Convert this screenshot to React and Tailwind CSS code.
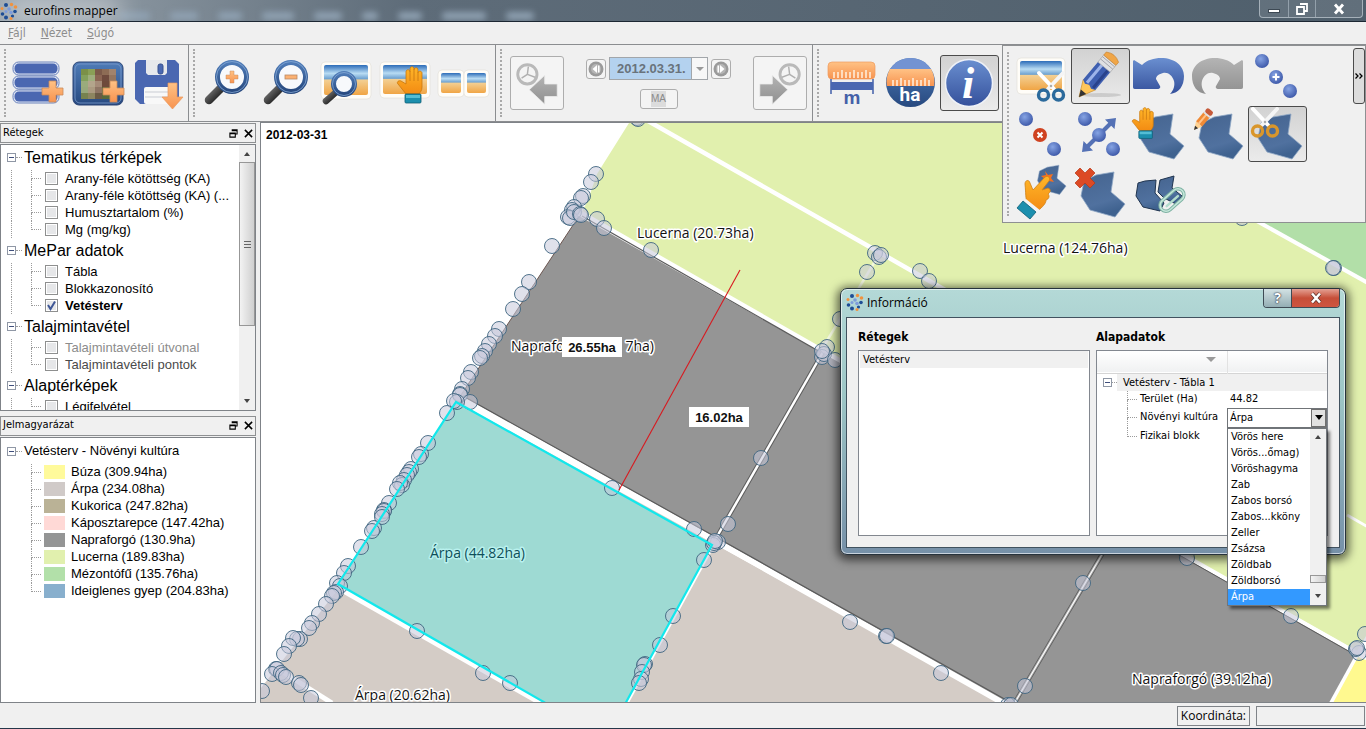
import { useState } from 'react';

const layerGroups = [
  {
    name: 'Tematikus térképek',
    items: [
      { label: 'Arany-féle kötöttség (KA)' },
      { label: 'Arany-féle kötöttség (KA) (...' },
      { label: 'Humusztartalom (%)' },
      { label: 'Mg (mg/kg)' },
    ],
  },
  {
    name: 'MePar adatok',
    items: [
      { label: 'Tábla' },
      { label: 'Blokkazonosító' },
      { label: 'Vetésterv', checked: true },
    ],
  },
  {
    name: 'Talajmintavétel',
    items: [
      { label: 'Talajmintavételi útvonal', tone: 'text-[#8c8c8c]' },
      { label: 'Talajmintavételi pontok', tone: 'text-[#4a4a4a]' },
    ],
  },
  { name: 'Alaptérképek', items: [{ label: 'Légifelvétel' }] },
];

const legend = [
  { label: 'Búza (309.94ha)', color: 'bg-[#fffa9b]' },
  { label: 'Árpa (234.08ha)', color: 'bg-[#d0cac8]' },
  { label: 'Kukorica (247.82ha)', color: 'bg-[#bab296]' },
  { label: 'Káposztarepce (147.42ha)', color: 'bg-[#ffd9d6]' },
  { label: 'Napraforgó (130.9ha)', color: 'bg-[#949595]' },
  { label: 'Lucerna (189.83ha)', color: 'bg-[#e1f0ae]' },
  { label: 'Mézontófű (135.76ha)', color: 'bg-[#b2e0a9]' },
  { label: 'Ideiglenes gyep (204.83ha)', color: 'bg-[#88afcd]' },
];

const crops = [
  'Vörös here', 'Vörös...őmag)', 'Vöröshagyma', 'Zab', 'Zabos borsó', 'Zabos...kköny',
  'Zeller', 'Zsázsa', 'Zöldbab', 'Zöldborsó', 'Árpa',
];

// field boundary nodes, in map units
const nodes = [
  [637, 118], [638, 119], [596, 174], [591, 182], [583, 196], [581, 198], [574, 207], [572, 210], [568, 217],
  [570, 218], [574, 212], [580, 214], [581, 215], [597, 219], [604, 228], [651, 250], [552, 246],
  [529, 282], [522, 294], [513, 309], [499, 329], [495, 336], [489, 344], [485, 351], [482, 356],
  [480, 358], [471, 372], [468, 378], [462, 389], [460, 394], [460, 395], [470, 402], [457, 402],
  [454, 401], [447, 413], [428, 443], [421, 454], [419, 457], [411, 469], [409, 472], [407, 475],
  [404, 480], [402, 485], [400, 483], [397, 489], [389, 503], [384, 510], [384, 511], [382, 514],
  [382, 517], [374, 528], [372, 531], [361, 547], [348, 566], [344, 573], [337, 583], [340, 586],
  [336, 592], [334, 593], [332, 596], [326, 604], [319, 614], [312, 623], [309, 628], [300, 639],
  [297, 639], [293, 638], [289, 646], [284, 654], [276, 669], [277, 669], [272, 674], [281, 673],
  [283, 675], [286, 677], [299, 683], [301, 685], [311, 698], [262, 691], [417, 631], [483, 673],
  [510, 683], [612, 488], [694, 529], [728, 524], [718, 542], [713, 545], [714, 543], [715, 541], [704, 560],
  [761, 458], [673, 616], [660, 645], [645, 664], [644, 665], [642, 672], [641, 679], [639, 683],
  [850, 622], [886, 636], [887, 636], [941, 673], [1025, 686], [1008, 705], [1011, 705], [875, 253], [879, 257],
  [881, 255], [867, 272], [920, 271], [929, 281], [840, 319], [827, 347], [822, 357],
  [824, 354], [822, 351], [835, 360], [1083, 583], [1187, 558], [1291, 616], [1359, 653], [1356, 649], [1357, 648],
  [1365, 634], [1334, 268], [1333, 268], [1242, 218],
];

function Gradients() {
  return (
    <svg width="0" height="0" className="absolute" aria-hidden="true">
      <defs>
        <linearGradient id="blue" x1="0" y1="0" x2="0" y2="1">
          <stop offset="0" stopColor="#6a8fd0" />
          <stop offset="1" stopColor="#34509b" />
        </linearGradient>
        <linearGradient id="navy" x1="0" y1="0" x2="0" y2="1">
          <stop offset="0" stopColor="#4f7cb8" />
          <stop offset="1" stopColor="#27497f" />
        </linearGradient>
        <radialGradient id="ball" cx="0.4" cy="0.35" r="0.7">
          <stop offset="0" stopColor="#86a4e4" />
          <stop offset="1" stopColor="#3a55a6" />
        </radialGradient>
        <linearGradient id="orange" x1="0" y1="0" x2="0" y2="1">
          <stop offset="0" stopColor="#ffc285" />
          <stop offset="1" stopColor="#f79350" />
        </linearGradient>
        <linearGradient id="hand" x1="0" y1="0" x2="0" y2="1">
          <stop offset="0" stopColor="#ffb629" />
          <stop offset="1" stopColor="#f38b12" />
        </linearGradient>
        <linearGradient id="sky" x1="0" y1="0" x2="0" y2="1">
          <stop offset="0" stopColor="#2c6cb8" />
          <stop offset="0.28" stopColor="#b9dcf3" />
          <stop offset="0.46" stopColor="#6fa2d0" />
          <stop offset="0.5" stopColor="#f3cf92" />
          <stop offset="1" stopColor="#f0a545" />
        </linearGradient>
        <linearGradient id="field" x1="0" y1="0" x2="0.3" y2="1">
          <stop offset="0" stopColor="#45648f" />
          <stop offset="0.75" stopColor="#50719f" />
          <stop offset="1" stopColor="#3f628f" />
        </linearGradient>
        <linearGradient id="grey" x1="0" y1="0" x2="0" y2="1">
          <stop offset="0" stopColor="#b4b4b4" />
          <stop offset="1" stopColor="#8f8f8f" />
        </linearGradient>
        <linearGradient id="stick" x1="0" y1="0" x2="1" y2="1">
          <stop offset="0" stopColor="#777" />
          <stop offset="1" stopColor="#161616" />
        </linearGradient>
      </defs>
    </svg>
  );
}

function Icon({ children }) {
  return (
    <svg viewBox="0 0 59 56" className="block h-14 w-[59px] shrink-0" aria-hidden="true">{children}</svg>
  );
}

const Plus = ({ x, y, s = 21, fill = 'url(#orange)', stroke = '#c98a5c' }) => (
  <path
    transform={`translate(${x} ${y}) scale(${s / 21})`}
    d="M7 0h7v7h7v7h-7v7H7v-7H0V7h7z"
    fill={fill}
    stroke={stroke}
    strokeWidth="0.8"
  />
);

const Photo = ({ x, y, w, h }) => (
  <g>
    <rect x={x} y={y} width={w} height={h} rx="4" fill="#fffdf8" stroke="#e3e0da" strokeWidth="0.7" />
    <rect x={x + 3} y={y + 3} width={w - 6} height={h - 7} rx="2" fill="url(#sky)" />
  </g>
);

const Lens = ({ cx, cy, r, hx, hy }) => (
  <g>
    <path
      d={`M${cx - r * 0.72} ${cy + r * 0.72}L${hx} ${hy}`}
      stroke="url(#stick)"
      strokeWidth={r * 0.5}
      strokeLinecap="round"
    />
    <circle cx={cx} cy={cy} r={r - 2.5} fill="#f7f9fc" stroke="url(#navy)" strokeWidth="5" />
    <circle cx={cx} cy={cy} r={r - 1.5} fill="none" stroke="#86a9d6" strokeWidth="0.8" />
  </g>
);

const Hand = ({ transform }) => (
  <g transform={transform}>
    <path
      d="M9 28C6 25 4 21 1 18c-2-2 1-4 3-3l5 3V6c0-3 4-3 4 0V3c0-3 4-3 4 0v1c0-3 4-3 4 0v3c0-3 4-2 4 0v14c0 4-2 5-3 7z"
      fill="url(#hand)"
      stroke="#c9770d"
      strokeWidth="0.8"
    />
    <path d="M13 6v9M17 4v11M21 7v8" stroke="#cf7f14" strokeWidth="1" />
    <rect x="8" y="28" width="16" height="9" rx="1" fill="#1c8fae" stroke="#0c5d75" strokeWidth="0.8" />
    <rect x="9" y="29" width="14" height="3" fill="#54bdd4" />
  </g>
);

const Field = ({ transform }) => (
  <path
    transform={transform}
    d="M43 8L40 28L54 40L44 53L19 46L10 32L13 17L25 11Z"
    fill="url(#field)"
    stroke="#8ea7c5"
    strokeWidth="0.8"
  />
);

const Scissors = ({ x, y, ring }) => (
  <g transform={`translate(${x} ${y})`} fill="none">
    <path d="M2 0L17 16" stroke="#fff" strokeWidth="4" strokeLinecap="round" />
    <path d="M26 0L11 16" stroke="#f5f5f5" strokeWidth="4" strokeLinecap="round" />
    <circle cx="14" cy="13" r="1.2" fill="#aaa" />
    <circle cx="6.5" cy="22" r="5" stroke={ring} strokeWidth="3.4" />
    <circle cx="21.5" cy="22" r="5" stroke={ring} strokeWidth="3.4" />
  </g>
);

const Ball = ({ cx, cy, fill = 'url(#ball)' }) => <circle cx={cx} cy={cy} r="7" fill={fill} />;

const mosaic = [
  '#7b9048', '#8aa056', '#7c5a4a', '#8d6c55', '#a0836d',
  '#84a05c', '#9fae7e', '#8b6553', '#6f4b3e', '#93755f',
  '#9aab7c', '#b3a58b', '#a58b78', '#6e4a3b', '#7a5d49',
  '#98a87c', '#ab9a80', '#8e7564', '#5f6b3c', '#7d6b4b',
  '#77824f', '#8d8560', '#6b5a45', '#59693a', '#66753f',
];

const DataIcon = () => (
  <Icon>
    {[7, 21, 35].map((y) => (
      <g key={y}>
        <rect x="4" y={y} width="46" height="13" rx="5.5" fill="#dfe5f3" stroke="#5b76b6" strokeWidth="0.9" />
        <rect x="5.5" y={y + 1.5} width="43" height="10" rx="4.5" fill="#4a67b1" />
      </g>
    ))}
    <Plus x={33} y={26} />
  </Icon>
);

const RasterIcon = () => (
  <Icon>
    <rect x="5" y="7" width="50" height="43" rx="6" fill="url(#navy)" stroke="#2a4374" />
    <rect x="7" y="9" width="46" height="39" rx="5" fill="none" stroke="#7b9bcc" strokeWidth="0.8" />
    {mosaic.map((c, i) => (
      <rect key={i} x={13 + (i % 5) * 7} y={14 + Math.floor(i / 5) * 6} width="7" height="6" fill={c} />
    ))}
    <Plus x={35} y={26} />
  </Icon>
);

const SaveIcon = () => (
  <Icon>
    <path d="M11 5h37l4 4v37l-3 3H13l-5-5V8z" fill="#4a67b1" />
    <path d="M19 5h21v13l-2 2H21l-2-2z" fill="#e6e8ec" />
    <rect x="31" y="9" width="5" height="10" rx="2" fill="#4a68b2" stroke="#36508f" />
    <rect x="17" y="32" width="27" height="17" rx="2" fill="#f8f8f8" />
    <path d="M18 37h25M18 42h25" stroke="#c9ccd3" />
    <path d="M41 28h9v14h6L45.500 54L35 42h6z" fill="url(#orange)" stroke="#e99a5e" strokeWidth="0.7" />
  </Icon>
);

const ZoomInIcon = () => (
  <Icon>
    <Lens cx={34} cy={22} r={17} hx={11} hy={45} />
    <Plus x={28} y={16} s={12} />
  </Icon>
);

const ZoomOutIcon = () => (
  <Icon>
    <Lens cx={34} cy={22} r={17} hx={11} hy={45} />
    <rect x="28" y="20" width="12" height="4" fill="#fbb173" stroke="#b98a66" strokeWidth="0.8" />
  </Icon>
);

const ZoomAreaIcon = () => (
  <Icon>
    <Photo x={5} y={7} w={50} h={37} />
    <Lens cx={28} cy={29} r={13} hx={10} hy={46} />
  </Icon>
);

const PanIcon = () => (
  <Icon>
    <Photo x={5} y={7} w={50} h={36} />
    <Hand transform="translate(22 11)" />
  </Icon>
);

const CompareIcon = () => (
  <Icon>
    <Photo x={4} y={15} w={26} h={27} />
    <Photo x={30} y={15} w={25} h={27} />
  </Icon>
);

const LengthIcon = () => (
  <Icon>
    <rect x="6" y="7" width="47" height="17" rx="4" fill="url(#orange)" stroke="#ee9c5f" strokeWidth="0.7" />
    <path d="M12 23v-6M16 23v-6M20 23v-8M24 23v-6M28 23v-6M32 23v-8M36 23v-6M40 23v-6M44 23v-8M48 23v-6" stroke="#fff0df" strokeWidth="1.500" />
    <path d="M9 24v15M51 24v15" stroke="#6d83bb" strokeWidth="2" />
    <rect x="9" y="27" width="42" height="8" fill="#4a67b1" />
    <text x="30" y="49" textAnchor="middle" fill="#4460a8" className="font-['Liberation_Sans'] text-[19px] font-bold">m</text>
  </Icon>
);

const AreaIcon = () => (
  <Icon>
    <circle cx="29.500" cy="27.500" r="24.500" fill="url(#navy)" />
    <path d="M9 14A24.500 24.500 0 0 1 50 14z" fill="#7393d2" />
    <path d="M9 14H50A24.500 24.500 0 0 1 53 31H6A24.500 24.500 0 0 1 9 14z" fill="url(#orange)" />
    <path d="M12 31v-6M16 31v-6M20 31v-8M24 31v-6M28 31v-6M32 31v-8M36 31v-6M40 31v-6M44 31v-8M48 31v-6" stroke="#fff0df" strokeWidth="1.500" />
    <text x="29" y="46" textAnchor="middle" fill="#fff" className="font-['Roboto'] text-[19px] font-bold">ha</text>
  </Icon>
);

const InfoIcon = () => (
  <Icon>
    <circle cx="29" cy="28" r="23.500" fill="url(#blue)" stroke="#eef1f7" strokeWidth="1.500" />
    <text x="28" y="43" textAnchor="middle" fill="#fff" className="font-['Liberation_Serif'] text-[44px] font-bold italic">i</text>
  </Icon>
);

const ClipPhotoIcon = () => (
  <Icon>
    <Photo x={5} y={10} w={48} h={36} />
    <Scissors x={25} y={25} ring="#2b6a9c" />
  </Icon>
);

const PencilIcon = () => (
  <Icon>
    <ellipse cx="30" cy="47" rx="20" ry="2" fill="#b9b9b9" opacity="0.6" />
    <g transform="translate(8 49) rotate(40)">
      <path d="M0 0L-8 -16H8z" fill="#ffc65a" stroke="#c58a2c" strokeWidth="0.6" />
      <path d="M0 0L-3.500 -7H3.500z" fill="#333" />
      <path d="M-8 -16L-4 -14L0 -16L4 -14L8 -16V-40H-8z" fill="#3f5fb0" />
      <path d="M-3 -16V-40" stroke="#9db4ea" strokeWidth="3" />
      <path d="M5 -16V-40" stroke="#2a438c" strokeWidth="3" />
      <rect x="-8" y="-48" width="16" height="9" fill="#dfe0e3" stroke="#a6a6a6" strokeWidth="0.6" />
      <path d="M-8 -46H8M-8 -43H8" stroke="#9c9ca3" strokeWidth="0.8" />
      <path d="M-8 -48V-52Q0 -57 8 -52V-48z" fill="#f0a648" stroke="#c77f2a" strokeWidth="0.6" />
    </g>
  </Icon>
);

const undoPath = 'M4 12L12 17C17 12 24 10 31 10C45 10 54 18 54 28C54 38 49 45 40 46C44 42 45 37 44 33C42 27 38 24 33 25C29 26 26 28 26 31L30 38C31 40 29 41 28 41H5C3 41 3 40 3 38V13Z';

const UndoIcon = () => (
  <Icon><path d={undoPath} fill="url(#blue)" /></Icon>
);

const RedoIcon = () => (
  <Icon><path d={undoPath} transform="translate(57 0) scale(-1 1)" fill="url(#grey)" /></Icon>
);

const NodeAddIcon = () => (
  <Icon>
    <Ball cx={14} cy={13} /><Ball cx={28} cy={29} /><Ball cx={42} cy={43} />
    <path d="M28 25.500v7M24.500 29h7" stroke="#fff" strokeWidth="2" />
  </Icon>
);

const NodeDeleteIcon = () => (
  <Icon>
    <Ball cx={14} cy={13} /><Ball cx={28} cy={29} fill="#cf4220" /><Ball cx={42} cy={43} />
    <path d="M25.500 26.500l5 5M30.500 26.500l-5 5" stroke="#fff" strokeWidth="2" />
  </Icon>
);

const NodeMoveIcon = () => (
  <Icon>
    <Ball cx={14} cy={13} /><Ball cx={42} cy={43} />
    <path d="M16 41L40 17" stroke="#5471b5" strokeWidth="4" />
    <path d="M45 12L43.500 23L34 13.500zM11 46L12.500 35L22 44.500z" fill="#5471b5" />
    <Ball cx={28} cy={29} />
  </Icon>
);

const FieldPanIcon = () => (
  <Icon><Field /><Hand transform="translate(2 1) scale(0.85)" /></Icon>
);

const FieldEditIcon = () => (
  <Icon>
    <Field />
    <g transform="translate(5 24) rotate(40)">
      <path d="M0 0L-4 -8H4z" fill="#ffd292" />
      <path d="M0 0L-2 -4H2z" fill="#333" />
      <rect x="-4" y="-20" width="8" height="12" fill="#f08a35" />
      <rect x="-1.500" y="-20" width="2" height="12" fill="#ffc38a" />
      <rect x="-4" y="-22" width="8" height="3" fill="#e0e0e0" />
      <rect x="-4" y="-26" width="8" height="5" rx="2" fill="#c65a3a" />
    </g>
  </Icon>
);

const FieldCutIcon = () => (
  <Icon><Field /><Scissors x={3} y={3} ring="#d9962b" /></Icon>
);

const FieldSelectIcon = () => (
  <Icon>
    <Field transform="translate(19 -4) scale(0.65)" />
    <path d="M33 7l3 4 5-1-2 4 3 4-5-1-4 3v-5l-4-3 5-1z" fill="#f5701e" />
    <path
      d="M16 41C13 34 14 29 13 20C13 16 17 15 18 19L21 26L33 13C36 11 39 14 37 17L30 26L36 24C39 25 39 28 36 30C38 32 37 35 34 36C34 40 30 43 26 47Z"
      fill="url(#hand)"
      stroke="#cf7f14"
      strokeWidth="0.8"
    />
    <path d="M14 35L29 47L25 51L10 39z" fill="#f1f4f5" />
    <path d="M11 37L24 48L18 55L5 44z" fill="#1c8fae" stroke="#0c5d75" strokeWidth="0.8" />
  </Icon>
);

const FieldDeleteIcon = () => (
  <Icon>
    <Field />
    <path d="M9 4l5 5 5-5 5 5-5 5 5 5-5 5-5-5-5 5-5-5 5-5-5-5z" fill="#dc4a25" stroke="#b83513" strokeWidth="0.7" />
  </Icon>
);

const FieldLinkIcon = () => (
  <Icon>
    <path d="M26 16L25 29L34 39L30 47L13 43L6 32L8 19L15 17z" fill="url(#field)" stroke="#20344f" />
    <path d="M44 12L42 24L52 32L46 40L34 34L28 28L30 16z" fill="url(#field)" stroke="#20344f" />
    <g transform="translate(42 36) rotate(-42)" fill="none">
      <rect x="-14" y="-6" width="28" height="12" rx="6" stroke="#7fb3a4" strokeWidth="3.500" />
      <rect x="-14" y="-6" width="28" height="12" rx="6" stroke="#c5e6da" strokeWidth="1.500" />
      <path d="M-8 1H7" stroke="#b3dccd" strokeWidth="2.500" strokeLinecap="round" />
    </g>
  </Icon>
);

const MapperLogo = () => (
  <svg viewBox="0 0 18 18" className="h-[18px] w-[18px] shrink-0" aria-hidden="true">
    <g fill="#1d4d95">
      <circle cx="6" cy="3" r="2" /><circle cx="2.500" cy="12" r="1.800" /><circle cx="6" cy="15.500" r="2" />
      <circle cx="15" cy="9.500" r="1.800" /><circle cx="12.500" cy="14" r="1.600" />
    </g>
    <g fill="#f0923e">
      <circle cx="11.500" cy="2.500" r="1.700" /><circle cx="15.500" cy="5" r="1.800" /><circle cx="2" cy="6.500" r="1.500" />
      <circle cx="11" cy="16.500" r="1.500" />
    </g>
    <g fill="#7d9cdb">
      <circle cx="9" cy="7" r="1.800" /><circle cx="6" cy="9.500" r="1.500" /><circle cx="11" cy="10.500" r="1.800" />
    </g>
  </svg>
);

const ClockArrow = ({ flip }) => (
  <svg viewBox="0 0 54 54" className={`h-[52px] w-[52px] ${flip ? '-scale-x-100' : ''}`} aria-hidden="true">
    <circle cx="17" cy="18" r="10" fill="#f4f4f4" stroke="#b9b9b9" strokeWidth="3" />
    <path d="M18 10l-1 8 8 3M17 18l-6 4" fill="none" stroke="#b0b0b0" strokeWidth="1.500" />
    <path d="M19 34L35 19V28H48V41H35V49z" fill="url(#grey)" stroke="#ededed" strokeWidth="0.800" />
  </svg>
);

const StepIcon = ({ flip }) => (
  <svg viewBox="0 0 16 16" className={`h-4 w-4 ${flip ? '-scale-x-100' : ''}`} aria-hidden="true">
    <circle cx="8" cy="8" r="7.500" fill="#9a9a9a" />
    <circle cx="8" cy="8" r="5" fill="#b5b5b5" />
    <path d="M9 4v8L4.500 8zM10 4.500h1.500v7H10z" fill="#fff" />
  </svg>
);

function Grip() {
  return <span className="my-1 mr-[3px] ml-1 w-0.5 shrink-0 self-stretch border-l-2 border-dotted border-[#a9a9a9]" />;
}

function ToolButton({ label, active, children }) {
  return (
    <button
      type="button"
      aria-label={label}
      className={`flex h-14 w-[59px] shrink-0 items-center justify-center overflow-hidden rounded-[3px] ${
        active ? 'border border-[#4b4b4b] bg-gradient-to-b from-[#d2d2d2] to-[#ebebeb]' : ''
      }`}
    >
      {children}
    </button>
  );
}

function TitleBar() {
  return (
    <header className="relative flex h-[22px] shrink-0 items-start overflow-hidden border-b border-[#1c2733] bg-gradient-to-r from-[#9aa5ae] via-[#5e6c79] via-30% to-[#4f5f6c]">
      <div className="absolute inset-x-0 top-2 flex gap-5 pl-[118px] blur-[3px]" aria-hidden="true">
        {['w-8', 'w-7', 'w-6', 'w-8', 'w-7', 'w-4', 'w-6', 'w-11', 'w-7'].map((w, i) => (
          <span key={i} className={`${w} mt-1 h-2 rounded bg-[#8fa1b2]`} />
        ))}
      </div>
      <div className="absolute inset-y-0 left-2 w-28 bg-white/50 blur-md" aria-hidden="true" />
      <div className="relative flex items-center gap-[6px]">
        <MapperLogo />
        <h1 className="text-xs leading-[22px] text-black">eurofins mapper</h1>
      </div>
      <div className="relative mr-[3px] ml-auto flex h-[18px] divide-x divide-[#93a0ab] rounded-b border border-t-0 border-[#a5b0b9] bg-white/10">
        <button type="button" aria-label="Kis méret" className="flex w-[29px] items-center justify-center">
          <span className="mt-1 h-1 w-3 border border-[#3d4954] bg-white" />
        </button>
        <button type="button" aria-label="Előző méret" className="flex w-[27px] items-center justify-center">
          <svg viewBox="0 0 12 12" className="h-3 w-3"><path d="M4 1h7v7H8M1 4h7v7H1z" fill="none" stroke="#fff" strokeWidth="1.800" /></svg>
        </button>
        <button type="button" aria-label="Bezárás" className="flex w-[46px] items-center justify-center">
          <svg viewBox="0 0 12 12" className="h-3 w-3"><path d="M2 1.500l8 9M10 1.500l-8 9" stroke="#fff" strokeWidth="2.800" /></svg>
        </button>
      </div>
    </header>
  );
}

function MenuBar() {
  return (
    <nav className="flex h-[23px] shrink-0 items-center gap-[15px] border-b border-[#8b8d90] px-2 font-['DejaVu_Sans_Condensed','Noto_Sans',sans-serif] text-xs text-[#8d8d8d]">
      <a href="#fajl"><u>F</u>ájl</a>
      <a href="#nezet"><u>N</u>ézet</a>
      <a href="#sugo"><u>S</u>úgó</a>
    </nav>
  );
}

function DateTools() {
  const softButton = 'flex items-center justify-center rounded-[3px] border border-[#adadad] bg-[#f4f4f4]';
  return (
    <div className="flex items-center gap-[22px] px-[5px]">
      <button type="button" aria-label="Előző időpont" className={`${softButton} h-[54px] w-[54px]`}><ClockArrow /></button>
      <div className="flex flex-col items-center gap-[9px]">
        <div className="flex items-center gap-[3px]">
          <button type="button" aria-label="Vissza" className={`${softButton} h-5 w-5`}><StepIcon /></button>
          <div className="flex h-[23px] w-[99px] border border-[#a2a6aa] bg-white">
            <input
              aria-label="Dátum"
              defaultValue="2012.03.31."
              className="w-[81px] min-w-0 bg-[#b4d2ef] pl-[7px] font-['Liberation_Sans'] text-[13px] font-bold text-[#69737c] outline-none"
            />
            <button type="button" aria-label="Naptár" className="flex flex-1 items-center justify-center border-l border-[#a2a6aa] bg-[#f7f7f7]">
              <span className="border-x-4 border-t-4 border-x-transparent border-t-[#999]" />
            </button>
          </div>
          <button type="button" aria-label="Tovább" className={`${softButton} h-5 w-5`}><StepIcon flip /></button>
        </div>
        <button type="button" className={`${softButton} h-5 w-[38px]`}>
          <span className="bg-[#dcdcdc] font-['Liberation_Sans'] text-[10px] leading-4 text-[#8a8a8a]">MA</span>
        </button>
      </div>
      <button type="button" aria-label="Következő időpont" className={`${softButton} h-[54px] w-[54px]`}><ClockArrow flip /></button>
    </div>
  );
}

function EditPanel() {
  return (
    <div className="absolute top-0 right-0 z-20 flex border border-[#8e9092] bg-[#f0f0f0] pt-0.5 pb-0.5">
      <Grip />
      <div className="grid grid-cols-5 gap-y-0.5">
        <ToolButton label="Kép kivágása"><ClipPhotoIcon /></ToolButton>
        <ToolButton label="Szerkesztés" active><PencilIcon /></ToolButton>
        <ToolButton label="Visszavonás"><UndoIcon /></ToolButton>
        <ToolButton label="Újra"><RedoIcon /></ToolButton>
        <ToolButton label="Pont hozzáadása"><NodeAddIcon /></ToolButton>
        <ToolButton label="Pont törlése"><NodeDeleteIcon /></ToolButton>
        <ToolButton label="Pont mozgatása"><NodeMoveIcon /></ToolButton>
        <ToolButton label="Tábla mozgatása"><FieldPanIcon /></ToolButton>
        <ToolButton label="Tábla rajzolása"><FieldEditIcon /></ToolButton>
        <ToolButton label="Tábla vágása" active><FieldCutIcon /></ToolButton>
        <ToolButton label="Tábla kijelölése"><FieldSelectIcon /></ToolButton>
        <ToolButton label="Tábla törlése"><FieldDeleteIcon /></ToolButton>
        <ToolButton label="Táblák összekapcsolása"><FieldLinkIcon /></ToolButton>
      </div>
      <button
        type="button"
        aria-label="További eszközök"
        className="ml-[46px] flex h-14 w-3 items-center justify-center rounded-[3px] border border-[#4b4b4b] bg-[#dcdcdc]"
      >
        <svg viewBox="0 0 8 6" className="h-[6px] w-2 shrink-0"><path d="M0.500 0.500L3 3L0.500 5.500M4.500 0.500L7 3L4.500 5.500" fill="none" stroke="#000" strokeWidth="1.300" /></svg>
      </button>
    </div>
  );
}

function Toolbar() {
  const group = 'flex shrink-0 items-center border-r border-[#8b8d90]';
  return (
    <div className="relative flex h-[77px] shrink-0 border-b border-[#8b8d90]">
      <div className={group}>
        <Grip />
        <ToolButton label="Adatok hozzáadása"><DataIcon /></ToolButton>
        <ToolButton label="Raszter hozzáadása"><RasterIcon /></ToolButton>
        <ToolButton label="Mentés"><SaveIcon /></ToolButton>
        <span className="w-0.5" />
      </div>
      <div className={group}>
        <Grip />
        <ToolButton label="Nagyítás"><ZoomInIcon /></ToolButton>
        <ToolButton label="Kicsinyítés"><ZoomOutIcon /></ToolButton>
        <ToolButton label="Kijelölt terület nagyítása"><ZoomAreaIcon /></ToolButton>
        <ToolButton label="Mozgatás"><PanIcon /></ToolButton>
        <ToolButton label="Osztott nézet"><CompareIcon /></ToolButton>
        <span className="w-0.5" />
      </div>
      <div className={group}>
        <Grip />
        <DateTools />
      </div>
      <div className="flex shrink-0 items-center">
        <Grip />
        <ToolButton label="Távolságmérés"><LengthIcon /></ToolButton>
        <ToolButton label="Területmérés"><AreaIcon /></ToolButton>
        <ToolButton label="Információ" active><InfoIcon /></ToolButton>
      </div>
      <EditPanel />
    </div>
  );
}

function Expander() {
  return (
    <span className="flex h-[9px] w-[9px] shrink-0 items-center justify-center border border-[#8f97a5] bg-white">
      <span className="h-px w-[5px] bg-[#3f4f7c]" />
    </span>
  );
}

function Branch({ last }) {
  return (
    <span className="flex w-[10px] shrink-0 flex-col self-stretch">
      <span className="flex-1 border-b border-l border-dotted border-[#9b9b9b]" />
      <span className={`flex-1 ${last ? '' : 'border-l border-dotted border-[#9b9b9b]'}`} />
    </span>
  );
}

function DockHeader({ title }) {
  return (
    <div className="flex h-5 shrink-0 items-center border border-[#8e9092] px-0.5 font-['DejaVu_Sans_Condensed','Noto_Sans',sans-serif] text-[11px]">
      <h2>{title}</h2>
      <button type="button" aria-label="Leválasztás" className="ml-auto">
        <svg viewBox="0 0 10 10" className="h-[9px] w-[9px]"><path d="M3 1h6v4.500H7M1 4.500h6V9H1zM3 1.800h6M1 5.300h6" fill="none" stroke="#000" strokeWidth="1.200" /></svg>
      </button>
      <button type="button" aria-label="Panel bezárása" className="ml-[6px]">
        <svg viewBox="0 0 10 10" className="h-[9px] w-[9px]"><path d="M1 1l8 8M9 1l-8 8" stroke="#000" strokeWidth="1.700" /></svg>
      </button>
    </div>
  );
}

function ScrollArrow({ up }) {
  return (
    <span className="flex h-[17px] shrink-0 items-center justify-center">
      <span className={`border-x-[3px] border-x-transparent ${up ? 'border-b-4 border-b-[#444]' : 'border-t-4 border-t-[#444]'}`} />
    </span>
  );
}

function LayerPanel() {
  return (
    <section className="mt-px flex min-h-0 flex-1 flex-col">
      <DockHeader title="Rétegek" />
      <div className="mt-px flex min-h-0 flex-1 border border-[#7f8388] bg-white">
        <div className="min-w-0 flex-1 overflow-hidden font-['Liberation_Sans',sans-serif]">
          {layerGroups.map((group) => (
            <div key={group.name}>
              <div className="flex h-[25px] items-center pl-[6px]">
                <Expander />
                <span className="w-[6px] border-t border-dotted border-[#9b9b9b]" />
                <span className="pl-0.5 text-base whitespace-nowrap">{group.name}</span>
              </div>
              {group.items.map((item, i) => (
                <label key={item.label} className="flex h-[17px] items-center pl-[10px]">
                  <span className="w-5 self-stretch border-l border-dotted border-[#9b9b9b]" />
                  <Branch last={i === group.items.length - 1} />
                  <span className="relative ml-1 flex h-[13px] w-[13px] shrink-0">
                    <input
                      type="checkbox"
                      defaultChecked={item.checked}
                      className="peer h-[13px] w-[13px] appearance-none border border-[#8e8f8f] bg-[#e6e7e9] shadow-[inset_0_0_0_1px_#fff]"
                    />
                    <svg viewBox="0 0 13 13" className="pointer-events-none absolute inset-0 hidden peer-checked:block">
                      <path d="M3 6l2.500 4L10 2.500" fill="none" stroke="#3f5796" strokeWidth="2" />
                    </svg>
                  </span>
                  <span className={`pl-[7px] text-[13px] whitespace-nowrap ${item.checked ? 'font-bold' : ''} ${item.tone || ''}`}>
                    {item.label}
                  </span>
                </label>
              ))}
            </div>
          ))}
        </div>
        <div className="flex w-4 shrink-0 flex-col bg-[#f0f0f0]">
          <ScrollArrow up />
          <div className="flex h-[164px] flex-col items-center justify-center gap-px border border-[#979797] bg-gradient-to-r from-[#f3f3f3] to-[#cfcfcf]">
            <span className="h-px w-[7px] bg-[#666]" />
            <span className="mt-px h-px w-[7px] bg-[#666]" />
            <span className="mt-px h-px w-[7px] bg-[#666]" />
          </div>
          <div className="flex-1" />
          <ScrollArrow />
        </div>
      </div>
    </section>
  );
}

function LegendPanel() {
  return (
    <section className="mt-[5px] flex min-h-0 flex-1 flex-col">
      <DockHeader title="Jelmagyarázat" />
      <div className="mt-px min-h-0 flex-1 overflow-hidden border border-[#7f8388] bg-white pt-px font-['Liberation_Sans',sans-serif]">
        <div className="flex h-[25px] items-center pl-[6px]">
          <Expander />
          <span className="w-[6px] border-t border-dotted border-[#9b9b9b]" />
          <span className="pl-0.5 text-[13px]">Vetésterv - Növényi kultúra</span>
        </div>
        <ul>
          {legend.map((item, i) => (
            <li key={item.label} className="flex h-[17px] items-center pl-[30px]">
              <Branch last={i === legend.length - 1} />
              <span className={`ml-[3px] h-[14px] w-[21px] shrink-0 ${item.color}`} />
              <span className="pl-[6px] text-[13px] whitespace-nowrap">{item.label}</span>
            </li>
          ))}
        </ul>
      </div>
    </section>
  );
}

function FieldMap() {
  const label = "font-['Open_Sans','Noto_Sans',sans-serif] text-[14px]";
  return (
    <svg
      viewBox="261 123 1105 579"
      preserveAspectRatio="xMinYMin slice"
      className="absolute inset-0 h-full w-full"
      role="img"
      aria-label="Táblatérkép"
    >
      <rect x="261" y="123" width="1400" height="800" fill="#fff" />
      {/* Lucerna */}
      <path d="M629 123L597 174L588 200L581 214L1357 651L1366 636V123Z" fill="#e1f0ae" />
      <path d="M1262 223L1366 281V123H1140Z" fill="#b2dfa8" />
      {/* Napraforgó */}
      <path d="M579 216L1357 654L1331 702H1006L459 398Z" fill="#959595" />
      <path d="M579 216L459 398" stroke="#6a5550" strokeWidth="1" />
      {/* Árpa */}
      <path d="M457 402L1003 703H261V688L339 588Z" fill="#d4ccc6" />
      {/* Búza */}
      <path d="M1358 657L1366 660V703H1333Z" fill="#fff98f" />

      <g fill="none" stroke="#fff">
        <path d="M648 121L877 251L1010 327" strokeWidth="4.500" />
        <path d="M1255 220L1368 283" strokeWidth="4" />
        <path d="M582 213L822 350" strokeWidth="4" />
        <path d="M822 350L1357 653" strokeWidth="4" />
        <path d="M1347 515L1368 527" strokeWidth="3" />
        <path d="M1357 655L1330 704" strokeWidth="3" />
        <path d="M822 349L877 258" stroke="#f3f8df" strokeWidth="2.500" />
        <path d="M460 398L714 540L1005 704" strokeWidth="6" />
        <path d="M339 588L545 705" strokeWidth="6" />
        <path d="M714 543L626 704" strokeWidth="4" />
        <path d="M278 669L332 703" strokeWidth="5" />
      </g>
      <g fill="none" stroke="#5b5b5b">
        <path d="M582 216L822 353" strokeWidth="1.200" />
        <path d="M463 396L714 536L1008 701" strokeWidth="1.200" />
        <path d="M1165 547L1350 652" strokeWidth="1" />
        <path d="M823 352L715 540M1104 551L1014 704" strokeWidth="4.500" />
      </g>
      <path d="M823 352L715 540" stroke="#fff" strokeWidth="2.500" />
      <path d="M1104 551L1014 704" stroke="#aaa" strokeWidth="3" />
      <path d="M1104 551L1014 704" stroke="#fff" strokeWidth="1.200" />

      <path d="M456 402L712 545L624 706L549 705L338 584Z" fill="#9edad3" />

      <g fill="#c6c9da" fillOpacity="0.550" stroke="#3f6580" strokeWidth="0.900">
        {nodes.map(([x, y], i) => <circle key={i} cx={x} cy={y} r="7.500" />)}
      </g>
      <path d="M549 705L338 584L456 402L712 545L624 706" fill="none" stroke="#12e8ec" strokeWidth="2.200" />
      <path d="M740 270L619 490" stroke="#d8191f" strokeWidth="1.100" />

      <g fill="#111" stroke="#fff" strokeWidth="3" strokeLinejoin="round" className="[paint-order:stroke]">
        <text x="637" y="238" className={label}>Lucerna (20.73ha)</text>
        <text x="1003" y="253" className={label}>Lucerna (124.76ha)</text>
        <text x="511" y="351" className={label}>Naprafo</text>
        <text x="654" y="351" textAnchor="end" className={label}>7ha)</text>
        <text x="1132" y="684" className={label}>Napraforgó (39.12ha)</text>
        <text x="355" y="700" className={label}>Árpa (20.62ha)</text>
      </g>
      <text x="430" y="558" fill="#0e4f59" stroke="#b9f1ee" strokeWidth="3" strokeLinejoin="round" className={`${label} [paint-order:stroke]`}>
        Árpa (44.82ha)
      </text>
      <g fill="#fff">
        <rect x="562" y="337" width="60" height="20" />
        <rect x="689" y="407" width="60" height="20" />
      </g>
      <g fill="#111" textAnchor="middle" className="font-['Liberation_Sans',sans-serif] text-[13px] font-bold">
        <text x="592" y="352">26.55ha</text>
        <text x="719" y="422">16.02ha</text>
      </g>
      <text x="266" y="139" className="font-['Liberation_Sans',sans-serif] text-[12px] font-bold">2012-03-31</text>
    </svg>
  );
}

function InfoDialog() {
  const [crop, setCrop] = useState('Árpa');

  return (
    <div
      role="dialog"
      aria-labelledby="info-title"
      className="absolute top-[165px] right-5 z-10 w-[506px] rounded-[7px] border border-[#26323c] bg-gradient-to-b from-[#b4d9d7] via-[#9dc6c6] via-40% to-[#7690a8] px-[5px] pb-[6px] shadow-[0_2px_10px_3px_rgba(0,0,0,0.6),inset_0_0_0_1px_rgba(255,255,255,0.6)]"
    >
      <div className="flex h-7 items-start">
        <span className="mt-1"><MapperLogo /></span>
        <h2 id="info-title" className="ml-[3px] text-xs leading-7">Információ</h2>
        <div className="ml-auto flex h-[19px] overflow-hidden rounded-b border border-t-0 border-[#3f4b55]">
          <button type="button" aria-label="Súgó" className="w-7 border-r border-[#3f4b55] bg-gradient-to-b from-[#d3e2e4] to-[#94aeb4] text-sm leading-[18px] font-bold text-white [text-shadow:0_0_2px_#223,0_0_1px_#223]">?</button>
          <button type="button" aria-label="Ablak bezárása" className="flex w-[47px] items-center justify-center bg-gradient-to-b from-[#e3a093] via-[#c64e38] to-[#cf5540]">
            <svg viewBox="0 0 12 12" className="h-3 w-3">
              <path d="M2 1.500l8 9M10 1.500l-8 9" stroke="#5c3028" strokeWidth="4" />
              <path d="M2 1.500l8 9M10 1.500l-8 9" stroke="#fff" strokeWidth="2.600" />
            </svg>
          </button>
        </div>
      </div>
      <div className="grid grid-cols-2 gap-[6px] border border-[#41525f] bg-[#f0f0f0] px-[11px] pt-[10px] pb-[11px] font-['DejaVu_Sans_Condensed','Noto_Sans',sans-serif] text-[11px]">
        <section>
          <h3 className="h-[22px] text-xs leading-[18px] font-bold">Rétegek</h3>
          <ul className="h-[186px] border border-[#82878f] bg-white px-px">
            <li className="bg-[#f0f0f0] px-[3px] leading-[17px]">Vetésterv</li>
          </ul>
        </section>
        <section>
          <h3 className="h-[22px] text-xs leading-[18px] font-bold">Alapadatok</h3>
          <div className="h-[186px] border border-[#82878f] bg-white">
            <table className="w-full table-fixed border-collapse">
              <thead>
                <tr className="h-[22px] border-b border-[#d5d5d5] bg-gradient-to-b from-white to-[#f0f1f2]">
                  <th className="w-[130px] border-r border-[#e2e2e2] p-0" aria-label="Tulajdonság">
                    <span className="mb-1 ml-[109px] block w-[10px] border-x-[5px] border-t-[5px] border-x-transparent border-t-[#999]" />
                  </th>
                  <th aria-label="Érték" />
                </tr>
              </thead>
              <tbody>
                <tr className="h-[17px]">
                  <td colSpan={2} className="p-0">
                    <div className="flex items-center pl-[6px]">
                      <Expander />
                      <span className="w-[5px] border-t border-dotted border-[#9b9b9b]" />
                      <span className="flex-1 bg-[#f0f0f0] pl-[6px] leading-[17px]">Vetésterv - Tábla 1</span>
                    </div>
                  </td>
                </tr>
                <tr className="h-[17px]">
                  <td className="p-0">
                    <div className="flex h-[17px] items-center pl-[30px]"><Branch /><span className="pl-[3px] whitespace-nowrap">Terület (Ha)</span></div>
                  </td>
                  <td className="p-0 pl-[3px]">44.82</td>
                </tr>
                <tr className="h-5">
                  <td className="p-0">
                    <div className="flex h-5 items-center pl-[30px]"><Branch /><label htmlFor="crop" className="pl-[3px] whitespace-nowrap">Növényi kultúra</label></div>
                  </td>
                  <td className="p-0">
                    <div className="relative h-5 w-[100px]">
                      <select
                        id="crop"
                        value={crop}
                        onChange={(e) => setCrop(e.target.value)}
                        className="h-5 w-full appearance-none border border-[#707478] bg-white pl-0.5 leading-[18px] outline-none"
                      >
                        {crops.map((c) => <option key={c}>{c}</option>)}
                      </select>
                      <span className="pointer-events-none absolute inset-y-px right-px flex w-[15px] items-center justify-center border border-[#6f6f6f] bg-[#e1e1e1]">
                        <span className="border-x-4 border-t-[5px] border-x-transparent border-t-black" />
                      </span>
                      <div className="absolute top-5 left-0 flex h-[178px] w-[100px] border border-[#70757a] bg-white shadow-[3px_3px_3px_rgba(0,0,0,0.5)]">
                        <ul role="listbox" aria-label="Növényi kultúra" className="min-w-0 flex-1">
                          {crops.map((c) => (
                            <li
                              key={c}
                              role="option"
                              aria-selected={c === crop}
                              onClick={() => setCrop(c)}
                              className={`h-4 pl-[3px] leading-4 whitespace-nowrap ${c === crop ? 'bg-[#3399ff] text-white' : ''}`}
                            >
                              {c}
                            </li>
                          ))}
                        </ul>
                        <div className="flex w-4 shrink-0 flex-col bg-[#f0f0f0]">
                          <ScrollArrow up />
                          <div className="flex-1" />
                          <div className="mb-[5px] h-2 border border-[#979797] bg-gradient-to-r from-[#f3f3f3] to-[#cfcfcf]" />
                          <ScrollArrow />
                        </div>
                      </div>
                    </div>
                  </td>
                </tr>
                <tr className="h-[18px]">
                  <td className="p-0">
                    <div className="flex h-[18px] items-center pl-[30px]"><Branch last /><span className="pl-[3px] whitespace-nowrap">Fizikai blokk</span></div>
                  </td>
                  <td className="p-0" />
                </tr>
              </tbody>
            </table>
          </div>
        </section>
      </div>
    </div>
  );
}

export default function App() {
  return (
    <div className="flex h-screen flex-col overflow-hidden border-b border-[#25374a] bg-[#f0f0f0] font-['Open_Sans','Noto_Sans',sans-serif] text-black">
      <Gradients />
      <TitleBar />
      <MenuBar />
      <Toolbar />
      <main className="flex min-h-0 flex-1">
        <aside className="mr-1 flex w-64 shrink-0 flex-col">
          <LayerPanel />
          <LegendPanel />
        </aside>
        <div className="relative min-w-0 flex-1 border border-r-0 border-[#7f8388]">
          <div className="absolute inset-0 overflow-hidden"><FieldMap /></div>
          <InfoDialog />
        </div>
      </main>
      <footer className="flex h-[25px] shrink-0 items-center justify-end gap-[6px] pr-px text-xs">
        <label htmlFor="coord" className="flex h-5 items-center border border-[#7f8388] px-[3px]">Koordináta:</label>
        <input id="coord" readOnly className="h-5 w-[109px] border border-[#7f8388] bg-[#f0f0f0] outline-none" />
      </footer>
    </div>
  );
}
